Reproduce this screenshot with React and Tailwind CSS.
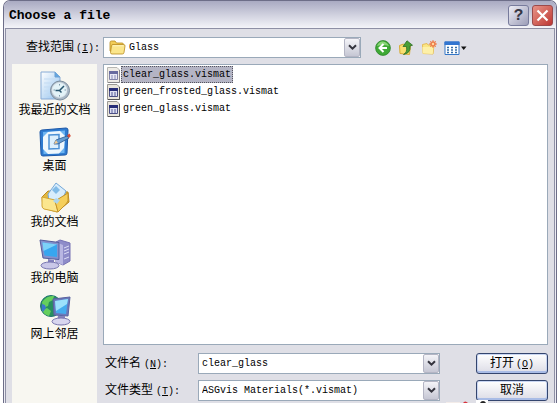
import { useState } from "react";

const FILES = ["clear_glass.vismat", "green_frosted_glass.vismat", "green_glass.vismat"];

function Chevron() {
  return (
    <span className="pointer-events-none w-[16px] shrink-0 self-stretch flex items-center justify-center border border-[#b4b5c4] rounded-xs bg-linear-to-b from-[#f4f4f8] to-[#c6c7d4]">
      <svg width="9" height="7" viewBox="0 0 9 7" fill="none" stroke="#34343e" strokeWidth="2">
        <path d="M1 1.2 4.5 4.7 8 1.2" />
      </svg>
    </span>
  );
}

function FolderIcon() {
  return (
    <svg width="17" height="15" viewBox="0 0 17 15" stroke="#b98a1f" strokeWidth="0.8">
      <path d="M1 11V2.500Q1 1 2.500 1H6l1.500 2H13q1.500 0 1.500 1.500V11Z" fill="#f2cd58" />
      <path d="M2.500 5.500Q2.700 4.500 4 4.500H14.500q1.700 0 1.500 1.500l-1 6.500Q14.800 14 13.300 14H3Q1.500 14 1.500 12.500Z" fill="#fbe68c" />
      <path d="M4 5.800h10.500" stroke="#fff8cf" />
    </svg>
  );
}

function FileIcon({ dim }) {
  return (
    <svg width="13" height="16" viewBox="0 0 13 16" className={dim ? "opacity-70" : ""}>
      <path d="M.5.5h9.500l2.500 2.500v12.500H.5Z" fill="#e9e5dc" stroke="#9a9894" />
      <path d="M12.500 3v12.500H1" fill="none" stroke="#55545a" />
      <path d="M2.500 4.500h8v8h-8Z" fill="#dfe0f2" stroke="#4c4f86" />
      <path d="M2 4h9v3H2Z" fill="#272d78" />
      <path d="M4 9h2M7 9h2M4 11h2M7 11h2" stroke="#555b98" />
    </svg>
  );
}

function RecentIcon() {
  return (
    <svg width="32" height="32" viewBox="0 0 32 32">
      <defs>
        <linearGradient id="paper" x1="0" y1="0" x2="1" y2="1">
          <stop stopColor="#fff" />
          <stop offset="1" stopColor="#8fc0ee" />
        </linearGradient>
      </defs>
      <path d="M2 2h14l5 5v22H2Z" fill="url(#paper)" stroke="#88abd6" />
      <path d="M16 2v5h5" fill="#62a5df" stroke="#6aa0d4" />
      <path d="M5 9h12M5 13h9M5 17h6M5 21h5M5 25h6" stroke="#c3dbf2" />
      <circle cx="21" cy="20.500" r="9.500" fill="#a9b8c6" stroke="#7d8e9e" />
      <circle cx="20.500" cy="20" r="7.300" fill="#e3f3f8" stroke="#dfe8ee" />
      <path d="M25 16 20.500 20.500h-4M20.500 20.500l2 2" stroke="#28566f" strokeWidth="1.500" fill="none" />
      <path d="M20.500 14v1.500M20.500 25v1.500M14.500 20H16M25.500 20H27" stroke="#7f98aa" />
    </svg>
  );
}

function DesktopIcon() {
  return (
    <svg width="32" height="32" viewBox="0 0 32 32">
      <path d="M3 4 27 2q2 0 2 2l-1 23q0 2-2 2L4 30q-2 0-2-2L1 6q0-2 2-2Z" fill="#2e7bd0" stroke="#1d58a8" />
      <path d="M4 6 26 4.500 25.500 27 4.500 28Z" fill="#6db4f1" />
      <path d="m9 6 12-1 5 5-1 12-5 5.500-11 .5-5-5V11Z" fill="#eef7fd" />
      <path d="m10 9 10-.5v14L10 23Z" fill="#dceffc" stroke="#4c91d5" strokeWidth="1.500" />
      <path d="m15 18 2-4 11-4 2 2-11 6Z" fill="#659dd1" stroke="#28578f" strokeWidth=".8" />
      <path d="m28 9.500 2.500-2 1.300 2.500-1.800 2Z" fill="#d64b35" />
      <path d="m15 18 2-4 2 3Z" fill="#f3cb91" />
    </svg>
  );
}

function DocumentsIcon() {
  return (
    <svg width="32" height="32" viewBox="0 0 32 32">
      <path d="M3 15 9 9l20 1 1 10-12 10-14-4Z" fill="#e4b83c" stroke="#b98920" />
      <path d="M9 12 17 1l10 8-5 12-12-2Z" fill="#d8edfc" stroke="#75a8d8" />
      <path d="m17 4 4 4-4 4-4-4Z" fill="#82bce8" />
      <path d="m3 15 13 3 3 12-14-3q-2-1-2-3Z" fill="#fbe68e" stroke="#d3a534" />
      <path d="m16 19 3 11 8-8q3-3 2-6V11Z" fill="#f5cf5b" stroke="#c39229" />
      <path d="m17 16 4 2-3 4-4-3Z" fill="#add5ec" />
    </svg>
  );
}

function ComputerIcon() {
  return (
    <svg width="32" height="32" viewBox="0 0 32 32">
      <path d="m17 4 4-2 10 3v18l-7 4-7-3Z" fill="#8e8cc9" stroke="#7672b4" />
      <path d="m17 4 7 3v20l-7-3Z" fill="#b8b6e2" />
      <path d="m25 10 5-2M25 13l5-2M25 16l5-2M25 21l5-2" stroke="#dcdcf5" />
      <path d="m1 2 19 2.500v17L4 20Z" fill="#8391cd" stroke="#545c9b" />
      <path d="M3.500 4.500 18 6.500V19L5.500 17.500Z" fill="#37a6ef" />
      <path d="M3.500 4.500 18 6.500 4.500 13Z" fill="#7dd2f8" />
      <path d="M9 21v5l6 1v-5Z" fill="#8280bd" />
      <ellipse cx="11" cy="27.500" rx="9" ry="3.500" fill="#c9c7e8" stroke="#7775b0" />
    </svg>
  );
}

function NetworkIcon() {
  return (
    <svg width="32" height="32" viewBox="0 0 32 32">
      <circle cx="12" cy="12" r="10.500" fill="#27905f" stroke="#1f7370" />
      <path d="M3 8q5-7 12-6l-1 4-4 2-1 4-5 2ZM3 16l5-2 4 3-2 5Q5 21 3 16Z" fill="#65cf5d" />
      <path d="M3 10q-1 5 1 8l3-4-1-3Z" fill="#3b79ce" />
      <path d="m14 5 17-2-2 19-14-1Z" fill="#6b79ba" stroke="#59629f" />
      <path d="m16 7 13-2-2 15-10-1Z" fill="#45acee" />
      <path d="m16 7 13-2-1 5-11 7Z" fill="#9ce1fb" />
      <path d="m19 22-1 4h8v-4Z" fill="#8582bb" />
      <ellipse cx="22" cy="27.500" rx="9" ry="3.500" fill="#d8d6ef" stroke="#7875ad" />
    </svg>
  );
}

function BackIcon() {
  return (
    <svg width="16" height="16" viewBox="0 0 16 16">
      <circle cx="8" cy="8" r="7.400" fill="#3fa936" stroke="#2d852b" strokeWidth=".8" />
      <path d="M2 6Q4 1 8 1.500T14 6Q8 4 2 6Z" fill="#8bd679" />
      <path d="M8.500 4 4.500 8l4 4M5 8h7" fill="none" stroke="#fff" strokeWidth="2" />
    </svg>
  );
}

function UpIcon() {
  return (
    <svg width="16" height="16" viewBox="0 0 16 16">
      <path d="M1.500 5.500 5.500 4l1 1h6l-1 9.500-9.500-1Z" fill="#f9df70" stroke="#d6ab36" />
      <path d="M5.500 14.500q4-2 3-8H5L9 .8l5.500 4.400-2.500.8Q13 13 5.500 14.500Z" fill="#4a9f35" stroke="#2d6e27" strokeWidth=".8" />
    </svg>
  );
}

function NewFolderIcon() {
  return (
    <svg width="16" height="16" viewBox="0 0 16 16">
      <path d="M1.500 4.500 6 3.500l1 1.500h6l-1 9-10-.5Z" fill="#fbe684" stroke="#e6bd58" />
      <path d="M1.500 7h11l-.8 7-10-.5Z" fill="#fdf0a8" />
      <circle cx="12" cy="4" r="2.800" fill="#ee7f4c" />
      <path d="M12 0v8M8 4h8M9.200 1.200l5.600 5.600M14.800 1.200 9.200 6.800" stroke="#ee7f4c" />
      <circle cx="12" cy="4" r="1.200" fill="#ffd9a0" />
    </svg>
  );
}

function ViewsIcon() {
  return (
    <svg width="23" height="16" viewBox="0 0 23 16">
      <path d="M1 2h14v12.500H1Z" fill="#fff" stroke="#3577c8" />
      <path d="M.5 1.500h15V5H.5Z" fill="#3275d0" />
      <path d="M3 7.500h2M7 7.500h2M11 7.500h2M3 10h2M7 10h2M11 10h2M3 12.500h2M7 12.500h2M11 12.500h2" stroke="#346da9" strokeWidth="1.300" />
      <path d="M17 6.500h5.500L19.700 10Z" fill="#111" />
    </svg>
  );
}

const PLACES = [
  { label: "我最近的文档", Icon: RecentIcon },
  { label: "桌面", Icon: DesktopIcon },
  { label: "我的文档", Icon: DocumentsIcon },
  { label: "我的电脑", Icon: ComputerIcon },
  { label: "网上邻居", Icon: NetworkIcon },
];

const TOOLS = [
  { label: "Back", Icon: BackIcon },
  { label: "Up one level", Icon: UpIcon },
  { label: "New folder", Icon: NewFolderIcon },
  { label: "Views", Icon: ViewsIcon },
];

function FieldLabel({ id, text, hotkey }) {
  return (
    <label htmlFor={id} className="w-[95px] shrink-0 pl-[2px] text-[12px] whitespace-nowrap">
      {text}
      <span className="pl-[3px] text-[10px]">(<u>{hotkey}</u>):</span>
    </label>
  );
}

function PushButton({ children }) {
  return (
    <button className="w-[72px] h-[21px] shrink-0 rounded-[3px] border border-[#34456e] bg-linear-to-b from-white to-[#dcdce6] text-[12px] leading-none shadow-[inset_0_-2px_0_0_#a9bce6,inset_0_0_0_1px_#c9d6f2]">
      {children}
    </button>
  );
}

export default function App() {
  const [selected, setSelected] = useState(FILES[0]);
  const [name, setName] = useState("clear_glass");

  return (
    <div className="min-h-screen flex flex-col bg-white pl-[3px] pr-px text-black font-['Liberation_Mono','Noto_Sans_CJK_SC',monospace] text-[10px]">
      <div className="relative grow flex flex-col rounded-t-[7px] border-x border-t border-[#6d6e88] bg-[#ececf3] overflow-hidden">
        <header className="h-[27px] shrink-0 flex items-center gap-[3px] bg-linear-to-b from-[#a9aac2] via-[#cfd0de] to-[#f4f4f9] pt-[2px] pl-[5px] pr-[3px]">
          <h1 className="grow text-[13px] font-bold">Choose a file</h1>
          <button aria-label="Help" className="size-[21px] rounded-[3px] border border-[#777b9c] bg-linear-to-br from-[#eeeef5] to-[#9c9db8] text-[16px] leading-none font-bold text-[#363644]">
            ?
          </button>
          <button aria-label="Close" className="size-[21px] rounded-[3px] border border-[#9c4a4b] bg-linear-to-br from-[#e79388] to-[#bd3434] flex items-center justify-center">
            <svg width="13" height="13" viewBox="0 0 13 13" stroke="#fff" strokeWidth="2.200">
              <path d="m1.500 1.500 10 10M11.500 1.500l-10 10" />
            </svg>
          </button>
        </header>

        <main className="grow flex flex-col mx-px border-x border-t border-[#8e8fa5] bg-[#dfdfe6] pl-[6px] pr-[6px] pt-[8px]">
          <div className="flex items-center h-[21px]">
            <label htmlFor="look-in" className="w-[91px] shrink-0 pl-[14px] text-[12px] whitespace-nowrap">
              查找范围<span className="pl-[2px] text-[10px]">(<u>I</u>):</span>
            </label>
            <div className="w-[258px] h-[21px] flex items-center bg-white border border-[#9aa9b9] pl-[5px]">
              <FolderIcon />
              <select id="look-in" className="grow h-full appearance-none pl-[3px] outline-none">
                <option>Glass</option>
              </select>
              <Chevron />
            </div>
            <div className="flex items-center gap-[7px] pl-[14px]">
              {TOOLS.map(({ label, Icon }) => (
                <button key={label} aria-label={label}>
                  <Icon />
                </button>
              ))}
            </div>
          </div>

          <div className="grow flex gap-[6px] pt-[6px]">
            <nav className="w-[85px] shrink-0 bg-[#f8f7f1] flex flex-col gap-[6px] pt-[6px]">
              {PLACES.map(({ label, Icon }) => (
                <button key={label} className="h-[50px] flex flex-col items-center gap-px text-[12px] leading-[16px] whitespace-nowrap">
                  <Icon />
                  {label}
                </button>
              ))}
            </nav>

            <div className="grow flex flex-col">
              <ul className="h-[281px] bg-white border border-[#9aa9b9] pt-px pl-[3px]">
                {FILES.map((file) => (
                  <li key={file}>
                    <button onClick={() => setSelected(file)} className="h-[17px] flex items-center gap-px">
                      <FileIcon dim={file === selected} />
                      <span
                        className={`h-[17px] leading-[15px] px-px border ${
                          file === selected ? "bg-[#b4b4c4] border-dotted border-[#55555f]" : "border-transparent"
                        }`}
                      >
                        {file}
                      </span>
                    </button>
                  </li>
                ))}
              </ul>

              <div className="flex items-center h-[21px] mt-[8px]">
                <FieldLabel id="file-name" text="文件名" hotkey="N" />
                <div className="w-[242px] h-[21px] flex bg-white border border-[#9aa9b9] pl-[3px]">
                  <input id="file-name" value={name} onChange={(e) => setName(e.target.value)} className="grow min-w-0 outline-none" />
                  <Chevron />
                </div>
                <div className="grow" />
                <PushButton>
                  打开<span className="pl-[2px] text-[10px]">(<u>O</u>)</span>
                </PushButton>
              </div>
              <div className="flex items-center h-[21px] mt-[6px]">
                <FieldLabel id="file-type" text="文件类型" hotkey="T" />
                <div className="w-[242px] h-[21px] flex bg-white border border-[#9aa9b9] pl-[3px]">
                  <select id="file-type" className="grow min-w-0 appearance-none outline-none">
                    <option>ASGvis Materials(*.vismat)</option>
                  </select>
                  <Chevron />
                </div>
                <div className="grow" />
                <PushButton>取消</PushButton>
              </div>
            </div>
          </div>
        </main>

        {/* tips of the marks that rise over the bottom edge */}
        <svg width="50" height="3" viewBox="0 0 50 3" className="absolute bottom-0 right-[60px]" aria-hidden="true">
          <path d="M0 2h14v1H0Z" fill="#f3ece9" />
          <path d="M17 3q2-3 5 0Z" fill="#d8323c" />
          <path d="M30 0h12v3H30Z" fill="#fff" />
          <path d="M34 3q1-2 3-2t3 2Z" fill="#222" />
        </svg>
      </div>
    </div>
  );
}
